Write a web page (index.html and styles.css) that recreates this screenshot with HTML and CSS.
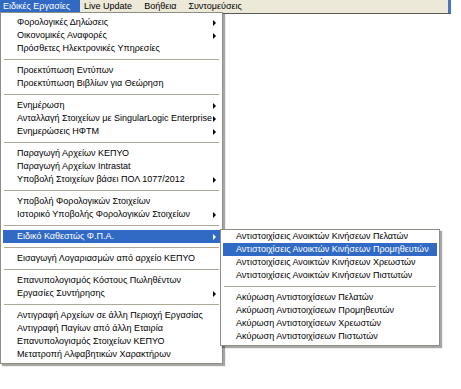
FILE: index.html
```html
<!DOCTYPE html>
<html lang="el">
<head>
    <meta charset="UTF-8">
    <title>Ειδικές Εργασίες</title>
    <link rel="stylesheet" href="styles.css">
</head>
<body>
    <div class="menubar">
        <span class="bar-item active">Ειδικές Εργασίες</span>
        <span class="bar-item">Live Update</span>
        <span class="bar-item">Βοήθεια</span>
        <span class="bar-item">Συντομεύσεις</span>
        <span class="bar-edge"></span>
    </div>

    <div class="menu main-menu">
        <div class="item sub">Φορολογικές Δηλώσεις</div>
        <div class="item sub">Οικονομικές Αναφορές</div>
        <div class="item">Πρόσθετες Ηλεκτρονικές Υπηρεσίες</div>
        <div class="sep"></div>
        <div class="item">Προεκτύπωση Εντύπων</div>
        <div class="item">Προεκτύπωση Βιβλίων για Θεώρηση</div>
        <div class="sep"></div>
        <div class="item sub">Ενημέρωση</div>
        <div class="item sub">Ανταλλαγή Στοιχείων με SingularLogic Enterprise</div>
        <div class="item sub">Ενημερώσεις ΗΦΤΜ</div>
        <div class="sep"></div>
        <div class="item">Παραγωγή Αρχείων ΚΕΠΥΟ</div>
        <div class="item">Παραγωγή Αρχείων Intrastat</div>
        <div class="item sub">Υποβολή Στοιχείων βάσει ΠΟΛ 1077/2012</div>
        <div class="sep"></div>
        <div class="item">Υποβολή Φορολογικών Στοιχείων</div>
        <div class="item sub">Ιστορικό Υποβολής Φορολογικών Στοιχείων</div>
        <div class="sep"></div>
        <div class="item sub selected">Ειδικό Καθεστώς Φ.Π.Α.</div>
        <div class="sep"></div>
        <div class="item">Εισαγωγή Λογαριασμών από αρχείο ΚΕΠΥΟ</div>
        <div class="sep"></div>
        <div class="item">Επανυπολογισμός Κόστους Πωληθέντων</div>
        <div class="item sub">Εργασίες Συντήρησης</div>
        <div class="sep"></div>
        <div class="item">Αντιγραφή Αρχείων σε άλλη Περιοχή Εργασίας</div>
        <div class="item">Αντιγραφή Παγίων από άλλη Εταιρία</div>
        <div class="item">Επανυπολογισμός Στοιχείων ΚΕΠΥΟ</div>
        <div class="item">Μετατροπή Αλφαβητικών Χαρακτήρων</div>
    </div>

    <div class="menu sub-menu">
        <div class="item">Αντιστοιχίσεις Ανοικτών Κινήσεων Πελατών</div>
        <div class="item selected">Αντιστοιχίσεις Ανοικτών Κινήσεων Προμηθευτών</div>
        <div class="item">Αντιστοιχίσεις Ανοικτών Κινήσεων Χρεωστών</div>
        <div class="item">Αντιστοιχίσεις Ανοικτών Κινήσεων Πιστωτών</div>
        <div class="sep"></div>
        <div class="item">Ακύρωση Αντιστοιχίσεων Πελατών</div>
        <div class="item">Ακύρωση Αντιστοιχίσεων Προμηθευτών</div>
        <div class="item">Ακύρωση Αντιστοιχίσεων Χρεωστών</div>
        <div class="item">Ακύρωση Αντιστοιχίσεων Πιστωτών</div>
    </div>
</body>
</html>
```

FILE: styles.css
```css
body {
    margin: 0;
    background-color: #fff;
    font-family: "Liberation Sans", Arial, sans-serif;
    font-size: 9px;
    color: #000;
}

.menubar {
    display: flex;
    width: 451px;
    height: 13px;
    background-color: #ece9d8;
    border-bottom: 1px solid #5a5a5a;
}

.bar-item {
    padding: 0 8px 0 4px;
    line-height: 13px;
}

.bar-item.active {
    background-color: #316ac5;
    color: #fff;
    padding: 0 10px 0 3px;
}

.bar-edge {
    margin-left: auto;
    width: 3px;
    background-color: #4d74c4;
}

.menu {
    position: absolute;
    background-color: #fff;
    border: 1px solid #8f8d84;
    box-shadow: 2px 2px 1px rgba(0, 0, 0, 0.35);
    padding: 2px;
}

.main-menu {
    left: 0;
    top: 12px;
    width: 217px;
    padding-top: 3px;
}

.sub-menu {
    left: 220px;
    top: 229px;
    width: 214px;
    padding-top: 0;
}

.item {
    position: relative;
    height: 13px;
    line-height: 13px;
    padding-left: 14px;
    white-space: nowrap;
}

.sub-menu .item {
    padding-left: 13px;
}

.item.sub::after {
    content: "";
    position: absolute;
    right: 4px;
    top: 4px;
    border-left: 3px solid #000;
    border-top: 3px solid transparent;
    border-bottom: 3px solid transparent;
}

.item.selected {
    background-color: #316ac5;
    color: #fff;
}

.item.selected::after {
    border-left-color: #fff;
}

.sep {
    height: 1px;
    margin: 4px 1px;
    background-color: #aca899;
}
```
